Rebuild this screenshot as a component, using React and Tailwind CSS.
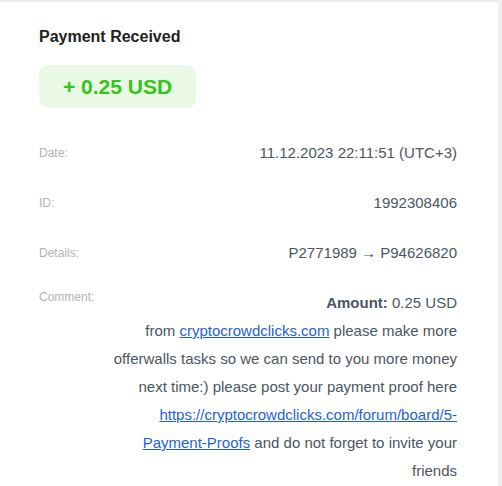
import React from 'react';

const rows = [
  { label: 'Date:', value: '11.12.2023 22:11:51 (UTC+3)' },
  { label: 'ID:', value: '1992308406' },
  { label: 'Details:', value: 'P2771989 → P94626820' },
];

export default function App() {
  return (
    <div className="flex h-[486px] w-[502px] bg-white font-['Liberation_Sans',Arial,sans-serif]">
      <div className="flex-1 flex flex-col">
        <div className="h-[3px] bg-gradient-to-b from-[#e4e4e4] to-white" />
        <div className="pl-[39px] pr-[41px] pt-[25px]">
          <h2 className="text-[16px] leading-[18px] font-bold text-[#222]">Payment Received</h2>
          <div className="mt-[19px] inline-flex rounded-[9px] bg-[#e9f9e6] px-[24px] py-[7px]">
            <span className="text-[21px] leading-[29px] font-bold text-[#35c418]">+ 0.25 USD</span>
          </div>

          <div className="mt-[31px] flex flex-col gap-[22px]">
            {rows.map((row) => (
              <div key={row.label} className="flex items-center">
                <span className="w-[73px] shrink-0 text-[12px] leading-4 text-[#b2b2b2]">{row.label}</span>
                <span className="flex-1 text-right text-[15px] leading-7 text-[#4b5563]">{row.value}</span>
              </div>
            ))}
            <div className="flex items-start">
              <span className="w-[73px] shrink-0 text-[12px] leading-4 text-[#b2b2b2]">Comment:</span>
              <div className="flex-1 text-right text-[15px] leading-7 text-[#4b5563]">
                <b>Amount:</b> 0.25 USD
                <br />
                from <a href="#" className="text-[#1f5fd6] underline">cryptocrowdclicks.com</a> please make more
                offerwalls tasks so we can send to you more money next time:) please post your payment proof here{' '}
                <a href="#" className="text-[#1f5fd6] underline">https://cryptocrowdclicks.com/forum/board/5-Payment-Proofs</a>{' '}
                and do not forget to invite your friends
              </div>
            </div>
          </div>
        </div>
      </div>
      <div className="w-[4px] bg-[#efefef]" />
    </div>
  );
}
